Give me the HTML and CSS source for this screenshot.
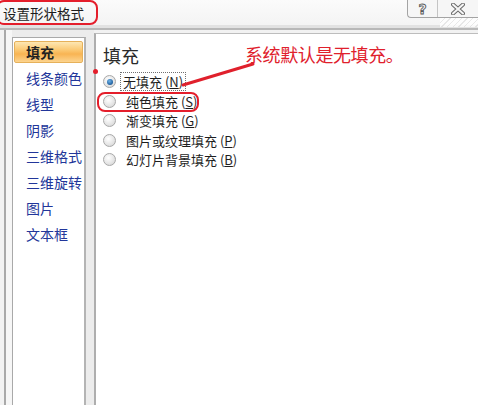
FILE: index.html
```html
<!DOCTYPE html>
<html lang="zh">
<head>
<meta charset="utf-8">
<link rel="stylesheet" href="styles.css">
</head>
<body>
<div class="window">
  <div class="titlebar">
    <span class="title">设置形状格式</span>
    <div class="caption-buttons">
      <span class="cap-btn help">?</span>
      <span class="cap-btn close">
        <svg width="14" height="12" viewBox="0 0 14 12">
          <path d="M2 1.5 L12 10.5 M12 1.5 L2 10.5" stroke="#6a6a6a" stroke-width="4" stroke-linecap="round"/>
          <path d="M2 1.5 L12 10.5 M12 1.5 L2 10.5" stroke="#f6f6f6" stroke-width="2" stroke-linecap="round"/>
        </svg>
      </span>
    </div>
  </div>
  <div class="main">
    <div class="navframe">
      <ul class="nav">
        <li class="nav-item selected"><span>填充</span></li>
        <li class="nav-item"><span>线条颜色</span></li>
        <li class="nav-item"><span>线型</span></li>
        <li class="nav-item"><span>阴影</span></li>
        <li class="nav-item"><span>三维格式</span></li>
        <li class="nav-item"><span>三维旋转</span></li>
        <li class="nav-item"><span>图片</span></li>
        <li class="nav-item"><span>文本框</span></li>
      </ul>
    </div>
    <div class="panel">
      <div class="heading">填充</div>
      <div class="options">
        <div class="option"><span class="radio checked"></span><span class="label focus">无填充 (<u>N</u>)</span></div>
        <div class="option"><span class="radio"></span><span class="label">纯色填充 (<u>S</u>)</span></div>
        <div class="option"><span class="radio"></span><span class="label">渐变填充 (<u>G</u>)</span></div>
        <div class="option"><span class="radio"></span><span class="label">图片或纹理填充 (<u>P</u>)</span></div>
        <div class="option"><span class="radio"></span><span class="label">幻灯片背景填充 (<u>B</u>)</span></div>
      </div>
    </div>
  </div>

  <div class="mark title-mark"></div>
  <div class="mark solid-mark"></div>
  <div class="red-dot"></div>
  <svg class="arrow-line" width="478" height="405" viewBox="0 0 478 405">
    <path d="M183 85 L253 64" stroke="#e0202c" stroke-width="3" stroke-linecap="round"/>
  </svg>
  <div class="note">系统默认是无填充。</div>
</div>
</body>
</html>
```
FILE: styles.css
```css
* { box-sizing: border-box; }
html, body {
  margin: 0;
  padding: 0;
}
body {
  width: 478px;
  height: 405px;
  overflow: hidden;
  font-family: "Noto Sans CJK SC", "Noto Sans", sans-serif;
  background: #f7f7f7;
}
.window {
  position: relative;
  width: 478px;
  height: 405px;
  display: flex;
  flex-direction: column;
}
.titlebar {
  height: 30px;
  flex: none;
  display: flex;
  align-items: flex-start;
  border-bottom: 2px solid #b8b8b8;
  box-shadow: inset 0 -3px 0 #e2e2e2;
  background: linear-gradient(#fbfbfb, #f3f3f3);
}
.title {
  font-size: 13.5px;
  line-height: 16px;
  color: #1c1c1c;
  margin: 5px 0 0 3px;
}
.caption-buttons {
  margin-left: auto;
  display: flex;
  height: 18px;
  border-left: 1px solid #a4a4a4;
  border-bottom: 1px solid #a4a4a4;
  border-radius: 0 0 0 4px;
  background: #f6f6f6;
  position: relative;
}
.caption-buttons::after {
  content: "";
  position: absolute;
  right: 0;
  top: 18px;
  width: 38px;
  height: 9px;
  background: repeating-linear-gradient(135deg, #ffffff 0 3px, #e4e4e4 3px 4px);
  opacity: 0.8;
}
.cap-btn {
  display: flex;
  align-items: center;
  justify-content: center;
  height: 17px;
}
.help {
  width: 30px;
  border-right: 1px solid #c4c4c4;
  font-family: "DejaVu Sans", sans-serif;
  font-weight: bold;
  font-size: 14px;
  color: #f4f4f4;
  -webkit-text-stroke: 0.9px #5a5a5a;
}
.close {
  width: 40px;
}
.main {
  flex: 1;
  display: flex;
  padding-left: 4px;
  background: #f2f2f2;
}
.navframe {
  border-left: 2px solid #a9a9a9;
  padding: 7px 8px 0 6px;
  background: linear-gradient(90deg, #f6f6f6 0 6px, #ececec 6px);
  display: flex;
}
.nav {
  list-style: none;
  margin: 0;
  padding: 1px 0 0 0;
  width: 74px;
  background: #fff;
  border: 1px solid #a9a9a9;
  border-bottom: none;
  border-right: 2px solid #b4b4b4;
}
.nav-item {
  height: 26px;
  padding: 2px 1px 2px 1px;
}
.nav-item span {
  display: flex;
  align-items: center;
  height: 22px;
  padding-left: 11px;
  font-size: 14px;
  color: #22369a;
  border: 1px solid transparent;
  border-radius: 2px;
}
.nav-item.selected span {
  background: linear-gradient(#fde7b3 0%, #fbc872 40%, #f8b453 60%, #fcd48f 100%);
  border-color: #e6b15a;
  color: #222;
  font-weight: bold;
}
.panel {
  flex: 1;
  margin-top: 3px;
  border-left: 2px solid #aeaeae;
  border-top: 1px solid #bdbdbd;
  background: #fff;
  padding: 10px 8px 0 7px;
}
.heading {
  font-size: 18px;
  line-height: 22px;
  color: #2a2a2a;
  margin-bottom: 6px;
}
.options {
  display: flex;
  flex-direction: column;
}
.option {
  height: 19.5px;
  display: flex;
  align-items: center;
}
.radio {
  width: 13px;
  height: 13px;
  border-radius: 50%;
  border: 1px solid #a8a8a8;
  background: radial-gradient(circle at 40% 35%, #ffffff 0, #e6e6e6 55%, #cfcfcf 100%);
  margin-right: 7px;
  display: flex;
  align-items: center;
  justify-content: center;
  flex: none;
}
.radio.checked::after {
  content: "";
  width: 6px;
  height: 6px;
  border-radius: 50%;
  background: radial-gradient(circle at 40% 35%, #6fb3e8 0, #1f5f9e 70%, #123e6e 100%);
}
.label {
  font-size: 13px;
  line-height: 17px;
  color: #1e1e1e;
  padding: 0 2px;
  border: 1px dotted transparent;
}
.label u {
  text-decoration: underline;
  text-underline-offset: 1px;
}
.label.focus {
  border-color: #707070;
  margin-left: -3px;
}
.mark {
  position: absolute;
  border: 2.5px solid #e41e2b;
  border-radius: 8px;
}
.title-mark {
  left: -4px;
  top: 0;
  width: 102px;
  height: 25px;
}
.solid-mark {
  left: 97px;
  top: 92px;
  width: 102px;
  height: 20px;
}
.red-dot {
  position: absolute;
  left: 93px;
  top: 69px;
  width: 5px;
  height: 5px;
  border-radius: 50%;
  background: #e41e2b;
}
.arrow-line {
  position: absolute;
  left: 0;
  top: 0;
  pointer-events: none;
}
.note {
  position: absolute;
  left: 245px;
  top: 43px;
  font-size: 18px;
  line-height: 22px;
  color: #e0202c;
  letter-spacing: -0.4px;
}
```
